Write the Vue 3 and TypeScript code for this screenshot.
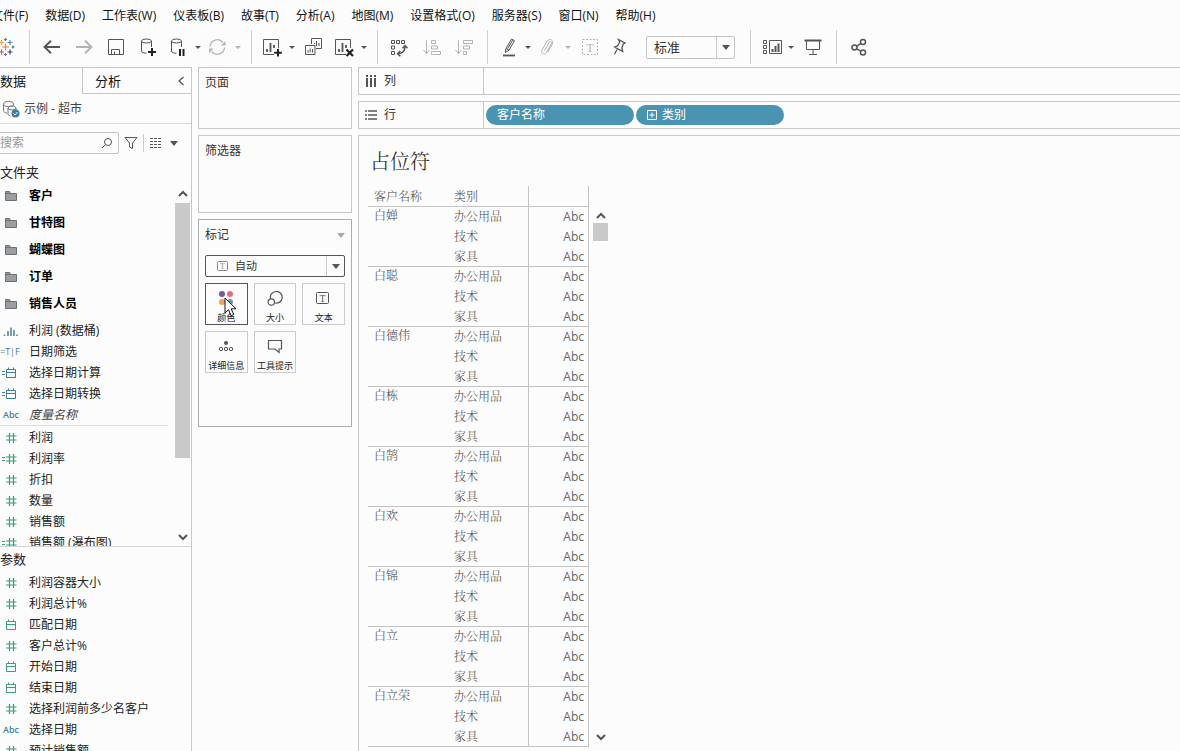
<script setup lang="ts">
import { ref } from 'vue'

type Tool = { kind: 'icon' | 'split' | 'sep' | 'caret' | 'fit'; icon?: string; label?: string; off?: boolean }
type Field = { name: string; icon: string; tone: 'dim' | 'mea'; italic?: boolean }

const menus = ['文件(F)', '数据(D)', '工作表(W)', '仪表板(B)', '故事(T)', '分析(A)', '地图(M)', '设置格式(O)', '服务器(S)', '窗口(N)', '帮助(H)']

const tools: Tool[] = [
  { kind: 'icon', icon: 'logo', label: '开始页面' },
  { kind: 'sep' },
  { kind: 'icon', icon: 'back', label: '撤销' },
  { kind: 'icon', icon: 'forward', label: '重做', off: true },
  { kind: 'icon', icon: 'save', label: '保存' },
  { kind: 'icon', icon: 'dbAdd', label: '新建数据源' },
  { kind: 'split', icon: 'dbPause', label: '暂停自动更新' },
  { kind: 'caret', label: '自动更新选项' },
  { kind: 'split', icon: 'refresh', label: '运行更新', off: true },
  { kind: 'caret', label: '更新选项', off: true },
  { kind: 'sep' },
  { kind: 'split', icon: 'sheetAdd', label: '新建工作表' },
  { kind: 'caret', label: '新建选项' },
  { kind: 'icon', icon: 'duplicate', label: '复制' },
  { kind: 'split', icon: 'sheetClear', label: '清除工作表' },
  { kind: 'caret', label: '清除选项' },
  { kind: 'sep' },
  { kind: 'icon', icon: 'swap', label: '交换行和列' },
  { kind: 'icon', icon: 'asc', label: '升序排序', off: true },
  { kind: 'icon', icon: 'desc', label: '降序排序', off: true },
  { kind: 'sep' },
  { kind: 'split', icon: 'pen', label: '突出显示' },
  { kind: 'caret', label: '突出显示选项' },
  { kind: 'split', icon: 'clip', label: '组成员', off: true },
  { kind: 'caret', label: '分组选项', off: true },
  { kind: 'icon', icon: 'markLabel', label: '显示标记标签', off: true },
  { kind: 'split', icon: 'pin', label: '固定轴' },
  { kind: 'fit' },
  { kind: 'sep' },
  { kind: 'split', icon: 'showCards', label: '显示卡' },
  { kind: 'caret', label: '卡选项' },
  { kind: 'icon', icon: 'present', label: '演示模式' },
  { kind: 'sep' },
  { kind: 'icon', icon: 'share', label: '共享' },
]

const cylinder = '<ellipse cx="8.500" cy="4" rx="5" ry="2"/><path d="M3.500 4v10c0 1.500 2 2.200 5 2.200M13.500 4v6"/>'
const sheet = '<path d="M12 17.500H1.500V2.500h15V11"/><path d="M5 15v-3M8.500 15V6M12 11V8" stroke-width="1.800"/>'

const icons: Record<string, string> = {
  logo:
    '<g stroke-width="1.200"><path stroke="#e8853a" d="M9.500 6.500v7M6 10h7"/><path stroke="#d2504c" d="M5.500 12.500v5M3 15h5"/><path stroke="#efa04b" d="M5.500 3v5M3 5.500h5"/><path stroke="#5a8fae" d="M14 3v5M11.500 5.500h5"/><path stroke="#2b4b78" d="M14 12.500v5M11.500 15h5"/><path stroke="#7a6a9c" d="M9.500 1v3M8 2.500h3M9.500 16v3M8 17.500h3"/><path stroke="#4a7898" d="M17 8.500v3M15.500 10h3M2 8.500v3M.500 10h3"/></g>',
  back: '<path stroke-width="1.900" d="M2.500 10H18M9 3.800L2.500 10l6.500 6.200"/>',
  forward: '<path stroke-width="1.900" d="M17.500 10H2M11 3.800l6.500 6.200-6.500 6.200"/>',
  save: '<path d="M2.500 2.500h15v15h-15z"/><path d="M5.500 17.500v-5h8v5M8.500 17v-2.500" />',
  dbAdd: cylinder + '<path stroke="#222" stroke-width="2" d="M14 11v8M10 15h8"/>',
  dbPause: cylinder + '<path stroke="#222" stroke-width="2" d="M12 12v7M15.500 12v7"/>',
  refresh: '<path d="M2 9.500a7.300 7.300 0 0 1 13-4M16.500 10.500a7.300 7.300 0 0 1-13 4" stroke-width="1.300"/><path fill="currentColor" stroke="none" d="M17.500 4v4.500H13zM1 16v-4.500h4.500z"/>',
  sheetAdd: sheet + '<path stroke="#222" stroke-width="2" d="M16 12v7.500M12.200 15.800h7.600"/>',
  sheetClear: sheet + '<path stroke="#222" stroke-width="2.200" d="M12.500 12.500l6.500 6.500M19 12.500l-6.500 6.500"/>',
  duplicate: '<path d="M7.500 7V1.500h10v10H12M1.500 8.500h9.500v9H1.500z"/><path d="M10.500 7V6M12.500 9V4M15 9V6M4 15.500V13M6.200 15.500v-4M8.500 15.500V12"/>',
  swap: '<path d="M1.500 3.500h3v3h-3zM6.500 3.500h3v3h-3zM11.500 3.500h3v3h-3zM1.500 9h3v3h-3zM1.500 14.500h3v3h-3z"/><path stroke-width="1.500" d="M15 9c0 5-2 7.500-7 7.700M12.500 11.200L15 8.500l2.500 2.700M10.300 14L7.500 16.700l2.800 2.600"/>',
  asc: '<path d="M4.500 3v13M1.500 13l3 3.500 3-3.500M9.500 3.500h4v3h-4zM9.500 9h6v3h-6zM9.500 14.500h9v3h-9z"/>',
  desc: '<path d="M4.500 3v13M1.500 13l3 3.500 3-3.500M9.500 3.500h9v3h-9zM9.500 9h6v3h-6zM9.500 14.500h3v3h-3z"/>',
  pen: '<path d="M8 11.500l5.500-9.500 3 1.700-5.500 9.500-3.700 2.200zM8 11.500l3 1.700M9.800 11.500l5-8.700"/><path stroke-width="1.800" d="M5 18.500h12"/>',
  clip: '<path d="M6.500 13.500l4.500-8c1.200-2 3.500-.5 2.400 1.400L8.300 15.500c-2 3-5.800.6-4.400-2.300L9 4.500c2.600-4.200 7.300-1.200 5 3l-4 7.500"/>',
  markLabel: '<path stroke-dasharray="2 1.500" d="M2.500 2.500h15v15h-15z"/><text x="10" y="14.500" class="glyph">T</text>',
  pin: '<path d="M8.500 2.500l6.500 3.500-1.800 1-1.300 4 .8 3.500-8-4.500 3-1.300 2-3.700zM7 12.500l-2.500 4.800" stroke-width="1.300"/>',
  showCards: '<path d="M2.500 3.500h3v3h-3zM2.500 8.500h3v3h-3zM2.500 13.500h3v3h-3zM8.500 3.500h12v13h-12z"/><path stroke-width="2" d="M11.500 15v-3M14.500 15V9M17.500 15V6.500"/>',
  present: '<path stroke-width="2" d="M1.500 3.500h17"/><path d="M3.500 4v8.500h13V4M10 12.500v5M6 17.500h8"/>',
  share: '<g stroke-width="1.500"><circle cx="5.500" cy="10.500" r="2.500"/><circle cx="14" cy="5" r="2.500"/><circle cx="14" cy="15.500" r="2.500"/><path d="M7.700 9.200l4.200-2.800M7.700 11.800l4.200 2.400"/></g>',
}

const hash = '<path stroke-width="1.200" d="M9.500 2v10M13.500 2v10M6 5h10.500M6 9h10.500"/>'
const cal = '<path d="M6.500 3.500h9v8h-9zM6.500 6.500h9M8.500 3.500V1.500M13.500 3.500V1.500"/>'
const eq = '<path d="M2 5.500h3M2 8.500h3"/>'
const fieldIcons: Record<string, string> = {
  hash,
  cal,
  calcHash: eq + hash,
  calcCal: eq + cal,
  bins: '<path stroke-width="1.500" d="M4.500 12v-1.500M8 12V7M11 12V3.500M14 12V6M17 12v-1.500"/>',
}

const folders = ['客户', '甘特图', '蝴蝶图', '订单', '销售人员']
const dimensions: Field[] = [
  { name: '利润 (数据桶)', icon: 'bins', tone: 'dim' },
  { name: '日期筛选', icon: '=T|F', tone: 'dim' },
  { name: '选择日期计算', icon: 'calcCal', tone: 'dim' },
  { name: '选择日期转换', icon: 'calcCal', tone: 'dim' },
  { name: '度量名称', icon: 'Abc', tone: 'dim', italic: true },
]
const measures: Field[] = [
  { name: '利润', icon: 'hash', tone: 'mea' },
  { name: '利润率', icon: 'calcHash', tone: 'mea' },
  { name: '折扣', icon: 'hash', tone: 'mea' },
  { name: '数量', icon: 'hash', tone: 'mea' },
  { name: '销售额', icon: 'hash', tone: 'mea' },
  { name: '销售额 (瀑布图)', icon: 'calcHash', tone: 'mea' },
]
const parameters: Field[] = [
  { name: '利润容器大小', icon: 'hash', tone: 'mea' },
  { name: '利润总计%', icon: 'hash', tone: 'mea' },
  { name: '匹配日期', icon: 'cal', tone: 'mea' },
  { name: '客户总计%', icon: 'hash', tone: 'mea' },
  { name: '开始日期', icon: 'cal', tone: 'mea' },
  { name: '结束日期', icon: 'cal', tone: 'mea' },
  { name: '选择利润前多少名客户', icon: 'hash', tone: 'mea' },
  { name: '选择日期', icon: 'Abc', tone: 'dim' },
  { name: '预计销售额', icon: 'hash', tone: 'mea' },
]
const fieldGroups = [dimensions, measures]

const marks = [
  { name: '颜色', svg: '<g stroke="none"><circle cx="6" cy="6" r="3" fill="#7d5a8c"/><circle cx="14" cy="6" r="3" fill="#ea6b7c"/><circle cx="6" cy="14" r="3" fill="#efa355"/><circle cx="14" cy="14" r="3" fill="#6f95bd"/></g>' },
  { name: '大小', svg: '<path stroke-width="1.200" d="M5.500 10.800a6 5.800 0 1 1 4 4"/><circle cx="6.300" cy="14" r="3.200" stroke-width="1.200"/>' },
  { name: '文本', svg: '<rect x="2.500" y="4.500" width="12" height="11" rx="1"/><text x="8.500" y="13.500" class="glyph small">T</text>' },
  { name: '详细信息', svg: '<circle cx="10" cy="7" r="2" fill="currentColor" stroke="none"/><circle cx="5" cy="13" r="1.700"/><circle cx="10" cy="13" r="1.700"/><circle cx="15" cy="13" r="1.700"/>' },
  { name: '工具提示', svg: '<path stroke-width="1.200" d="M3.500 4.500h13v8.500h-2.500v3.500L10 13H3.500z"/>' },
]

const customers = ['白婵', '白聪', '白德伟', '白栋', '白鹄', '白欢', '白锦', '白立', '白立荣']
const categories = ['办公用品', '技术', '家具']

const fit = ref('标准')
const markType = ref('自动')
const query = ref('')
</script>

<template>
  <div class="app">
    <nav class="menubar">
      <a v-for="m in menus" :key="m" href="#">{{ m }}</a>
    </nav>

    <div class="toolbar">
      <template v-for="(t, i) in tools" :key="i">
        <span v-if="t.kind === 'sep'" class="sep"></span>
        <span v-else-if="t.kind === 'fit'" class="fit">
          <select v-model="fit" aria-label="适合">
            <option>标准</option>
            <option>整个视图</option>
          </select>
          <span class="drop"><i class="tri"></i></span>
        </span>
        <button v-else-if="t.kind === 'caret'" class="caret" :class="{ off: t.off }" :aria-label="t.label"><i class="tri tiny"></i></button>
        <button v-else class="tool" :class="[t.kind, { off: t.off }]" :aria-label="t.label">
          <svg viewBox="0 0 20 20" class="ico" v-html="icons[t.icon!]"></svg>
        </button>
      </template>
    </div>

    <main class="work">
      <aside class="data">
        <div class="tabs">
          <button class="tab on">数据</button>
          <button class="tab side">
            <span>分析</span>
            <svg viewBox="0 0 8 10" class="fold"><path d="M6.500 1L2 5l4.500 4" /></svg>
          </button>
        </div>
        <div class="source">
          <svg viewBox="0 0 18 18" class="srcicon">
            <g fill="none" stroke="#777">
              <ellipse cx="6.500" cy="4" rx="5" ry="2.500" />
              <path d="M1.500 4v6.500c0 1.500 1.500 2.500 3.500 2.500M11.500 4v1.500" />
              <ellipse cx="10" cy="8" rx="4" ry="2" />
              <path d="M6 8v6c0 1 1 1.700 2.500 2M14 8v2" />
            </g>
            <circle cx="13.500" cy="13.500" r="4" fill="#38819f" stroke="none" />
            <path d="M11.500 13.500l1.500 1.500 2.500-3" fill="none" stroke="#fff" />
          </svg>
          <span>示例 - 超市</span>
        </div>
        <div class="finder">
          <label class="search">
            <input v-model="query" type="text" placeholder="搜索" aria-label="搜索" />
            <svg viewBox="0 0 12 12" class="lens"><circle cx="7" cy="5" r="3.500" /><path d="M4.500 7.500L1 11" /></svg>
          </label>
          <button class="mini" aria-label="筛选">
            <svg viewBox="0 0 14 14" class="funnel"><path d="M1 1.500h12L8.500 7v5.500l-3-1.500V7z" /></svg>
          </button>
          <span class="bar"></span>
          <button class="mini viewmode" aria-label="视图">
            <svg viewBox="0 0 12 10" class="rows"><path d="M0 .500h12M0 3.500h12M0 6.500h12M0 9.500h12" /></svg>
            <i class="tri"></i>
          </button>
        </div>
        <h2 class="head">文件夹</h2>
        <section class="scroller">
          <div class="list">
            <ul>
              <li v-for="f in folders" :key="f" class="folder">
                <svg viewBox="0 0 12 10" class="foldicon"><path d="M.500 9.500V.500h4l1 2h6v7zM.500 2.500h5" /></svg>
                <b>{{ f }}</b>
              </li>
            </ul>
            <ul v-for="(g, gi) in fieldGroups" :key="gi" class="fields">
              <li v-for="f in g" :key="f.name" :class="[f.tone, { it: f.italic }]">
                <svg v-if="fieldIcons[f.icon]" viewBox="0 0 20 14" class="fico" v-html="fieldIcons[f.icon]"></svg>
                <span v-else class="ftext" :class="{ abc: f.icon === 'Abc' }">{{ f.icon }}</span>
                <span class="fname">{{ f.name }}</span>
              </li>
            </ul>
          </div>
          <div class="track">
            <svg viewBox="0 0 10 8" class="chev"><path d="M1 6l4-4 4 4" /></svg>
            <span class="thumb"></span>
            <svg viewBox="0 0 10 8" class="chev end"><path d="M1 2l4 4 4-4" /></svg>
          </div>
        </section>
        <section class="params">
          <h2 class="head">参数</h2>
          <ul>
            <li v-for="f in parameters" :key="f.name" :class="f.tone">
              <svg v-if="fieldIcons[f.icon]" viewBox="0 0 20 14" class="fico" v-html="fieldIcons[f.icon]"></svg>
              <span v-else class="ftext abc">{{ f.icon }}</span>
              <span class="fname">{{ f.name }}</span>
            </li>
          </ul>
        </section>
      </aside>

      <div class="cards">
        <section class="card pages"><h3>页面</h3></section>
        <section class="card filters"><h3>筛选器</h3></section>
        <section class="card marks">
          <div class="cardhead">
            <h3>标记</h3>
            <i class="tri pale"></i>
          </div>
          <div class="marktype">
            <svg viewBox="0 0 12 12" class="tbox"><rect x=".500" y="1.500" width="10" height="9" rx="1" /><text x="5.500" y="9" class="glyph mini">T</text></svg>
            <select v-model="markType" aria-label="标记类型">
              <option>自动</option>
              <option>文本</option>
            </select>
            <span class="drop"><i class="tri"></i></span>
          </div>
          <div class="markgrid">
            <button v-for="(m, i) in marks" :key="m.name" :class="{ hot: i === 0 }">
              <svg viewBox="0 0 20 20" class="ico" v-html="m.svg"></svg>
              <span>{{ m.name }}</span>
              <svg v-if="i === 0" viewBox="0 0 12 20" class="pointer"><path d="M1 1v15l3.500-3.300 2.700 6 2.600-1.200-2.700-5.700H12z" /></svg>
            </button>
          </div>
        </section>
      </div>

      <div class="canvas">
        <section class="shelf">
          <div class="shelfname">
            <svg viewBox="0 0 12 12" class="shelficon"><path stroke-width="2" d="M2 0v2M6 0v2M10 0v2M2 3v9M6 3v9M10 3v9" /></svg>
            <span>列</span>
          </div>
        </section>
        <section class="shelf">
          <div class="shelfname">
            <svg viewBox="0 0 12 12" class="shelficon"><path stroke-width="1.600" d="M0 2h2M0 6h2M0 10h2M3 2h9M3 6h9M3 10h9" /></svg>
            <span>行</span>
          </div>
          <div class="pills">
            <button class="pill">客户名称</button>
            <button class="pill">
              <svg viewBox="0 0 10 10" class="plus"><path d="M.500.500h9v9h-9zM2.500 5h5M5 2.500v5" /></svg>类别
            </button>
          </div>
        </section>
        <section class="view">
          <h1>占位符</h1>
          <div class="grid">
            <table>
              <thead>
                <tr><th>客户名称</th><th>类别</th><th class="val"></th></tr>
              </thead>
              <tbody v-for="c in customers" :key="c">
                <tr v-for="(k, i) in categories" :key="k">
                  <th v-if="i === 0" rowspan="3" scope="rowgroup" class="who">{{ c }}</th>
                  <td>{{ k }}</td>
                  <td class="val">Abc</td>
                </tr>
              </tbody>
            </table>
            <div class="track vtrack">
              <svg viewBox="0 0 10 8" class="chev"><path d="M1 6l4-4 4 4" /></svg>
              <span class="thumb"></span>
              <svg viewBox="0 0 10 8" class="chev end"><path d="M1 2l4 4 4-4" /></svg>
            </div>
          </div>
        </section>
      </div>
    </main>
  </div>
</template>

<style>
html, body { background: #fcfcfc; }
svg text.glyph { font: 12px "Liberation Serif", serif; fill: currentColor; stroke: none; text-anchor: middle; }
svg text.glyph.small { font-size: 10px; }
svg text.glyph.mini { font-size: 8px; }
</style>

<style scoped>
.app {
  height: 100vh;
  display: flex;
  flex-direction: column;
  overflow: hidden;
  background: #fcfcfc;
  color: #222;
  font: 12px/20px "Open Sans", "Noto Sans CJK SC", sans-serif;
}
.app * { box-sizing: border-box; }
button, select, input { font: inherit; color: inherit; background: none; border: 0; padding: 0; margin: 0; outline: 0; }
ul { list-style: none; margin: 0; padding: 0; }
h1, h2, h3 { margin: 0; font-weight: 400; }
svg { display: block; flex: none; fill: none; stroke: currentColor; }

.menubar { display: flex; gap: 17px; height: 30px; align-items: center; padding-top: 2px; margin-left: -9px; flex: none; }
.menubar a { color: #111; text-decoration: none; white-space: nowrap; }

.toolbar { display: flex; align-items: center; height: 34px; margin: 0 0 3px -10px; flex: none; color: #555; }
.tool { display: flex; justify-content: center; width: 32px; height: 28px; align-items: center; flex: none; }
.tool.split { width: 28px; }
.caret { width: 12px; height: 28px; display: flex; align-items: center; justify-content: center; flex: none; }
.off { color: #b4b4b4; }
.ico { width: 20px; height: 20px; overflow: visible; }
.sep { width: 1px; height: 34px; margin: 0 6px 0 7px; background: #cfcfcf; flex: none; }
.tri { display: block; border: 4px solid transparent; border-top: 5px solid #555; border-bottom: 0; }
.tri.tiny { border-width: 3px; border-top: 3px solid currentColor; border-bottom: 0; }
.tri.pale { border-top-color: #aaa; }
.fit { display: flex; width: 89px; height: 23px; margin: 0 8px 0 12px; border: 1px solid #c4c4c4; border-radius: 2px; flex: none; }
select { appearance: none; flex: 1; min-width: 0; }
.fit select { padding-left: 7px; font-size: 13px; color: #333; line-height: 20px; }
.drop { display: flex; width: 18px; align-items: center; justify-content: center; border-left: 1px solid #ccc; flex: none; }

.work { flex: 1; display: flex; gap: 6px; min-height: 0; }

.data { width: 192px; flex: none; display: flex; flex-direction: column; border: solid #c8c8c8; border-width: 1px 1px 0 0; overflow: hidden; }
.tabs { display: flex; height: 26px; font-size: 13px; flex: none; }
.tab { width: 82px; text-align: left; color: #111; }
.side { flex: 1; display: flex; align-items: center; justify-content: space-between; padding: 0 6px 0 12px; border: solid #c8c8c8; border-width: 0 0 1px 1px; }
.fold { width: 8px; height: 10px; color: #555; stroke-width: 1.300; }
.source { display: flex; align-items: center; gap: 4px; height: 30px; padding-left: 2px; border-bottom: 1px solid #dcdcdc; color: #444; flex: none; }
.srcicon { width: 18px; height: 18px; }
.finder { display: flex; align-items: center; height: 38px; margin-left: -6px; flex: none; color: #555; }
.search { display: flex; align-items: center; width: 125px; height: 22px; border: 1px solid #c4c4c4; border-radius: 2px; padding: 0 5px; }
.search input { flex: 1; min-width: 0; }
.search input::placeholder { color: #999; opacity: 1; }
.lens { width: 12px; height: 12px; }
.mini { display: flex; align-items: center; padding: 0 5px; }
.funnel { width: 14px; height: 14px; }
.bar { width: 1px; height: 18px; background: #ccc; }
.viewmode { gap: 8px; padding-left: 6px; }
.rows { width: 12px; height: 10px; stroke-dasharray: 3 1; }
.head { font-size: 13px; line-height: 20px; color: #222; flex: none; }

.scroller { display: flex; height: 365px; flex: none; overflow: hidden; border-bottom: 1px solid #d4d4d4; }
.list { flex: 1; min-width: 0; }
.folder { display: flex; align-items: center; height: 27px; padding-left: 5px; gap: 12px; color: #000; }
.foldicon { width: 12px; height: 10px; fill: #9a9da1; stroke: #6c6f73; }
.fields { margin-right: 6px; padding-top: 3px; }
.fields + .fields { border-top: 1px solid #dcdcdc; padding-top: 1px; }
.fields li, .params li { display: flex; align-items: center; height: 21px; white-space: nowrap; }
.fico { width: 20px; height: 14px; margin-right: 9px; }
.ftext { width: 29px; font: 9px/20px "Open Sans", sans-serif; flex: none; }
.ftext.abc { padding-left: 3px; font-weight: 600; }
.dim { color: #3f7f9c; }
.mea { color: #3b9c80; }
.fname { color: #222; }
.it .fname { font-style: italic; color: #444; }
.track { width: 17px; display: flex; flex-direction: column; align-items: center; padding: 8px 1px 5px; color: #555; flex: none; }
.chev { width: 10px; height: 8px; stroke-width: 2; }
.chev.end { margin-top: auto; }
.thumb { width: 15px; height: 255px; margin-top: 5px; background: #c9c9c9; }
.params { flex: 1; min-height: 0; overflow: hidden; padding-top: 2px; }
.params ul { padding-top: 3px; }

.cards { width: 154px; display: flex; flex-direction: column; gap: 6px; flex: none; }
.card { border: 1px solid #c8c8c8; padding: 5px 6px; color: #333; }
.pages { height: 62px; }
.filters { height: 78px; }
.marks { height: 208px; border-color: #adadad; }
h3 { font-size: 12px; line-height: 20px; }
.cardhead { display: flex; align-items: center; justify-content: space-between; }
.marktype { display: flex; align-items: center; height: 22px; margin-top: 10px; border: 1px solid #555; border-radius: 2px; }
.marktype .tbox { margin: 0 6px 0 11px; color: #888; width: 12px; height: 12px; }
.marktype select { font-size: 11px; line-height: 20px; }
.marktype .drop { align-self: stretch; }
.markgrid { display: grid; grid-template-columns: repeat(3, 1fr); grid-auto-rows: 42px; gap: 6px; margin-top: 6px; }
.markgrid button { position: relative; display: flex; flex-direction: column; align-items: center; padding-top: 4px; border: 1px solid #cbcbcb; color: #555; }
.markgrid button.hot { border-color: #555; }
.markgrid span { font-size: 9px; line-height: 20px; color: #222; white-space: nowrap; }
.pointer { position: absolute; left: 18px; top: 13px; width: 12px; height: 20px; fill: #fff; stroke: #111; }

.canvas { flex: 1; min-width: 0; display: flex; flex-direction: column; gap: 6px; }
.shelf { display: flex; height: 28px; border: 1px solid #c8c8c8; border-right: 0; flex: none; }
.shelfname { display: flex; align-items: center; gap: 7px; width: 125px; padding-left: 6px; border-right: 1px solid #c8c8c8; color: #333; }
.shelficon { width: 12px; height: 12px; color: #555; }
.pills { display: flex; align-items: center; gap: 2px; padding-left: 2px; }
.pill { display: flex; align-items: center; gap: 5px; width: 148px; height: 20px; padding: 0 11px; border-radius: 10px; background: #4a94b1; color: #fff; }
.plus { width: 10px; height: 10px; }
.view { flex: 1; min-height: 0; overflow: hidden; border: solid #c8c8c8; border-width: 1px 0 0 1px; padding: 12px 0 0 9px; }
h1, table { font-family: "Liberation Serif", "Noto Serif CJK SC", "Source Han Serif SC", "SimSun", "Noto Sans CJK SC", serif; }
h1 { font-size: 20px; line-height: 28px; padding-left: 2px; color: #222; font-weight: 300; }
.grid { display: flex; margin-top: 10px; }
table { border-collapse: separate; border-spacing: 0; table-layout: fixed; width: 221px; color: #4c4c4c; line-height: 18px; flex: none; font-weight: 300; }
th, td { height: 20px; padding: 0 0 0 6px; text-align: left; font-weight: 300; vertical-align: middle; }
th:first-child { width: 80px; }
thead th { height: 21px; vertical-align: bottom; }
thead th.val { width: 61px; }
.val { padding: 0 4px 0 0; text-align: right; border: solid #c4c4c4; border-width: 0 1px; font-family: "Open Sans", sans-serif; color: #666; font-weight: 400; }
.who { vertical-align: top; }
thead th, thead .val, tbody .who, tbody tr:last-child td { border-bottom: 1px solid #c4c4c4; }
.vtrack { padding: 26px 2px 6px 0; margin-left: 4px; }
.vtrack .thumb { height: 18px; margin-top: 3px; }
</style>
